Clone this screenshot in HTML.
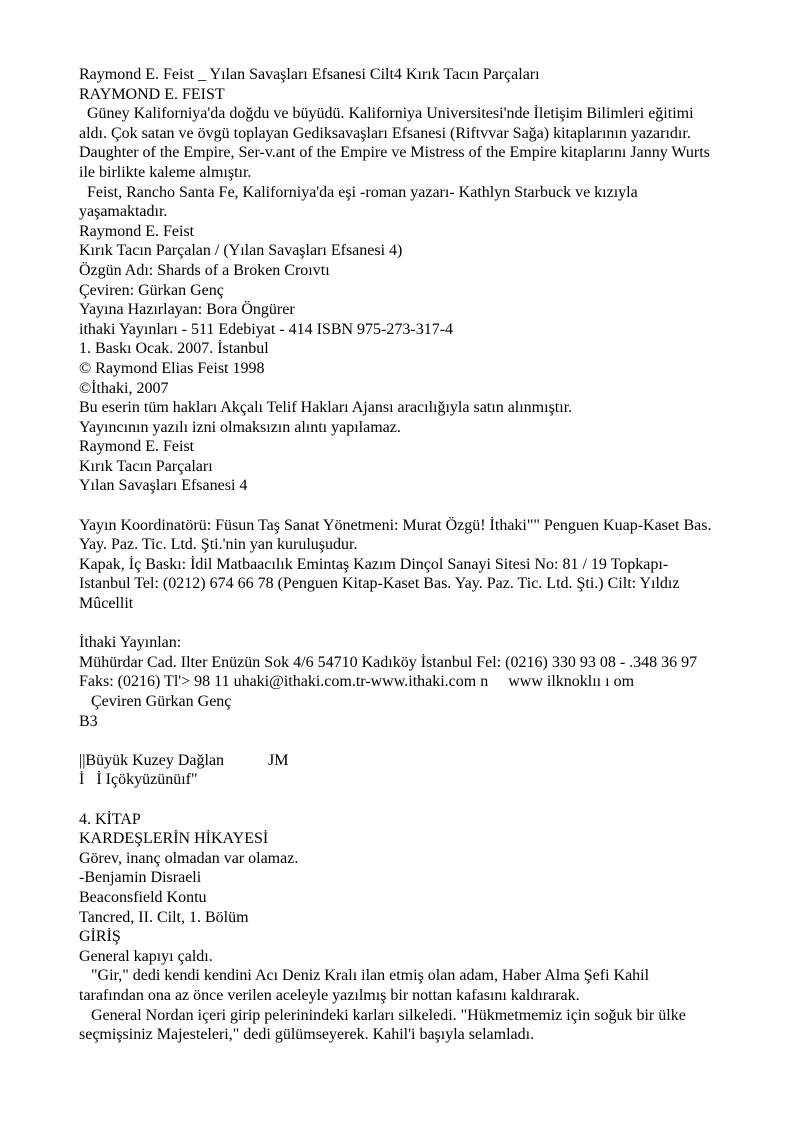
<!DOCTYPE html>
<html><head><meta charset="utf-8"><style>
html,body{margin:0;padding:0;background:#fff;}
body{width:793px;height:1122px;overflow:hidden;}
.t{position:absolute;left:79px;top:65px;font-family:"Liberation Serif",serif;font-size:16px;line-height:19.6px;color:#000;white-space:pre;}
</style></head><body><div class="t">Raymond E. Feist _ Yılan Savaşları Efsanesi Cilt4 Kırık Tacın Parçaları
RAYMOND E. FEIST
  Güney Kaliforniya'da doğdu ve büyüdü. Kaliforniya Universitesi'nde İletişim Bilimleri eğitimi
aldı. Çok satan ve övgü toplayan Gediksavaşları Efsanesi (Riftvvar Sağa) kitaplarının yazarıdır.
Daughter of the Empire, Ser-v.ant of the Empire ve Mistress of the Empire kitaplarını Janny Wurts
ile birlikte kaleme almıştır.
  Feist, Rancho Santa Fe, Kaliforniya'da eşi -roman yazarı- Kathlyn Starbuck ve kızıyla
yaşamaktadır.
Raymond E. Feist
Kırık Tacın Parçalan / (Yılan Savaşları Efsanesi 4)
Özgün Adı: Shards of a Broken Croıvtı
Çeviren: Gürkan Genç
Yayına Hazırlayan: Bora Öngürer
ithaki Yayınları - 511 Edebiyat - 414 ISBN 975-273-317-4
1. Baskı Ocak. 2007. İstanbul
© Raymond Elias Feist 1998
©İthaki, 2007
Bu eserin tüm hakları Akçalı Telif Hakları Ajansı aracılığıyla satın alınmıştır.
Yayıncının yazılı izni olmaksızın alıntı yapılamaz.
Raymond E. Feist
Kırık Tacın Parçaları
Yılan Savaşları Efsanesi 4

Yayın Koordinatörü: Füsun Taş Sanat Yönetmeni: Murat Özgü! İthaki"" Penguen Kuap-Kaset Bas.
Yay. Paz. Tic. Ltd. Şti.'nin yan kuruluşudur.
Kapak, İç Baskı: İdil Matbaacılık Emintaş Kazım Dinçol Sanayi Sitesi No: 81 / 19 Topkapı-
Istanbul Tel: (0212) 674 66 78 (Penguen Kitap-Kaset Bas. Yay. Paz. Tic. Ltd. Şti.) Cilt: Yıldız
Mûcellit

İthaki Yayınlan:
Mühürdar Cad. Ilter Enüzün Sok 4/6 54710 Kadıköy İstanbul Fel: (0216) 330 93 08 - .348 36 97
Faks: (0216) Tl'&gt; 98 11 uhaki@ithaki.com.tr-www.ithaki.com n     www ilknoklıı ı om
   Çeviren Gürkan Genç
B3

||Büyük Kuzey Dağlan           JM
İ   İ Içökyüzünüıf"

4. KİTAP
KARDEŞLERİN HİKAYESİ
Görev, inanç olmadan var olamaz.
-Benjamin Disraeli
Beaconsfield Kontu
Tancred, II. Cilt, 1. Bölüm
GİRİŞ
General kapıyı çaldı.
   "Gir," dedi kendi kendini Acı Deniz Kralı ilan etmiş olan adam, Haber Alma Şefi Kahil
tarafından ona az önce verilen aceleyle yazılmış bir nottan kafasını kaldırarak.
   General Nordan içeri girip pelerinindeki karları silkeledi. "Hükmetmemiz için soğuk bir ülke
seçmişsiniz Majesteleri," dedi gülümseyerek. Kahil'i başıyla selamladı.</div></body></html>
